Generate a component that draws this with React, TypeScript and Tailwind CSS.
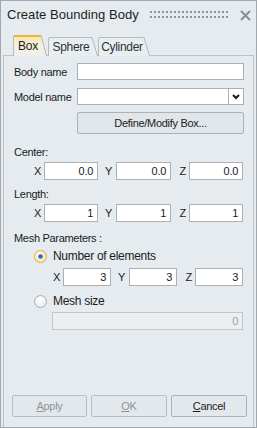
import React from 'react';

const font = { fontFamily: '"Liberation Sans", Arial, sans-serif' };

function Tab({ label, width, active }: { label: string; width: number; active?: boolean }) {
  const h = active ? 21 : 19;
  return (
    <div className="relative flex items-center justify-center" style={{ width, height: h }}>
      <svg className="absolute inset-0" width={width} height={h} viewBox={`0 0 ${width} ${h}`}>
        <defs>
          <linearGradient id="tabact" x1="0" y1="0" x2="0" y2="1">
            <stop offset="0" stopColor="#fbe6a6" />
            <stop offset="0.45" stopColor="#f6efd8" />
            <stop offset="1" stopColor="#eef0ed" />
          </linearGradient>
        </defs>
        <path
          d={`M0.5 ${h} V2 Q0.5 0.5 2 0.5 H${width - 6} L${width - 0.5} ${h}`}
          fill={active ? 'url(#tabact)' : '#e9eef1'}
          stroke="#b4babf"
        />
        {active && <path d={`M1 1 H${width - 6}`} stroke="#e8b53a" strokeWidth="2" />}
      </svg>
      <span className={`relative pr-[4px] text-[12px] ${active ? 'text-[#1b1b1b]' : 'text-[#2f3235]'}`}>{label}</span>
    </div>
  );
}

function Field({ value, w, disabled }: { value: string; w: number; disabled?: boolean }) {
  return (
    <div
      className={`h-[18px] border flex items-center justify-end pr-[4px] ${
        disabled ? 'bg-[#eceff1] border-[#c2c6ca] text-[#9aa0a5]' : 'bg-white border-[#abb0b5] text-[#1b1b1b]'
      }`}
      style={{ width: w }}
    >
      {value}
    </div>
  );
}

function Radio({ checked }: { checked?: boolean }) {
  return (
    <svg width="13" height="13" viewBox="0 0 13 13">
      <defs>
        <radialGradient id={checked ? 'rg1' : 'rg2'} cx="0.4" cy="0.35" r="0.7">
          <stop offset="0" stopColor={checked ? '#fff9e6' : '#ffffff'} />
          <stop offset="1" stopColor={checked ? '#f7e2a8' : '#e6eaed'} />
        </radialGradient>
      </defs>
      <circle cx="6.5" cy="6.5" r="6" fill={`url(#${checked ? 'rg1' : 'rg2'})`} stroke={checked ? '#e2a93c' : '#a9afb4'} />
      {checked && <circle cx="6.5" cy="6.5" r="2.3" fill="#2869d6" />}
    </svg>
  );
}

export default function App() {
  return (
    <div
      className="w-[257px] h-[428px] bg-[#e5ebef] border border-[#a2a8ad] flex flex-col text-[11px] leading-[14px] tracking-[-0.3px] text-[#1b1b1b] overflow-hidden"
      style={font}
    >
      {/* title */}
      <div className="h-[28px] flex items-center pl-[6px] pr-[5px] shrink-0">
        <span className="text-[13px] tracking-[0.05px] text-[#1e1e1e]">Create Bounding Body</span>
        <svg className="ml-[11px]" width="80" height="8" viewBox="0 0 80 8">
          {Array.from({ length: 20 }).map((_, i) => (
            <g key={i} fill="#8d949a">
              <rect x={i * 4} y="0" width="2" height="2" />
              <rect x={i * 4} y="5" width="2" height="2" />
            </g>
          ))}
        </svg>
        <svg className="ml-auto" width="11" height="11" viewBox="0 0 11 11">
          <path d="M1 1 L10 10 M10 1 L1 10" stroke="#8a9196" strokeWidth="2" />
        </svg>
      </div>

      {/* tabs */}
      <div className="mt-[6px] flex items-end pl-[12px] shrink-0 relative z-10">
        <Tab label="Box" width={34} active />
        <div className="ml-[1px]" />
        <Tab label="Sphere" width={50} />
        <Tab label="Cylinder" width={52} />
      </div>

      {/* panel */}
      <div className="flex-1 mx-[2px] -mt-px border border-b-0 border-[#bcc2c6] flex flex-col pb-[10px]">
        <div className="flex items-center mt-[7px] pl-[10px]">
          <span className="w-[63px]">Body name</span>
          <div className="w-[167px] h-[17px] bg-white border border-[#abb0b5]" />
        </div>
        <div className="flex items-center mt-[8px] pl-[10px]">
          <span className="w-[63px]">Model name</span>
          <div className="w-[167px] h-[17px] bg-white border border-[#abb0b5] flex justify-end">
            <div className="w-[15px] h-full border-l border-[#abb0b5] flex items-center justify-center">
              <svg width="8" height="6" viewBox="0 0 8 6">
                <path d="M1 1 L4 4 L7 1" stroke="#1b1b1b" strokeWidth="2" fill="none" />
              </svg>
            </div>
          </div>
        </div>
        <div className="flex mt-[7px] pl-[73px]">
          <button className="w-[167px] h-[22px] bg-[#e1e6ea] border border-[#adb2b6] rounded-[2px] text-[#1b1b1b]">
            Define/Modify Box...
          </button>
        </div>

        <div className="mt-[11px] pl-[10px]">Center:</div>
        <div className="flex items-center mt-[3px] pl-[26px]">
          <span className="w-[14px] text-right pr-[3px]">X</span>
          <Field value="0.0" w={54} />
          <span className="w-[18px] text-right pr-[4px]">Y</span>
          <Field value="0.0" w={55} />
          <span className="w-[18px] text-right pr-[3px]">Z</span>
          <Field value="0.0" w={54} />
        </div>

        <div className="mt-[7px] pl-[10px]">Length:</div>
        <div className="flex items-center mt-[3px] pl-[26px]">
          <span className="w-[14px] text-right pr-[3px]">X</span>
          <Field value="1" w={54} />
          <span className="w-[18px] text-right pr-[4px]">Y</span>
          <Field value="1" w={55} />
          <span className="w-[18px] text-right pr-[3px]">Z</span>
          <Field value="1" w={54} />
        </div>

        <div className="mt-[9px] pl-[10px]">Mesh Parameters :</div>
        <div className="flex items-center mt-[4px] pl-[30px] gap-[6px]">
          <Radio checked />
          <span className="text-[12px] tracking-[-0.3px]">Number of elements</span>
        </div>
        <div className="flex items-center mt-[5px] pl-[45px]">
          <span className="w-[14px] text-right pr-[3px]">X</span>
          <Field value="3" w={48} />
          <span className="w-[18px] text-right pr-[4px]">Y</span>
          <Field value="3" w={48} />
          <span className="w-[18px] text-right pr-[3px]">Z</span>
          <Field value="3" w={48} />
        </div>
        <div className="flex items-center mt-[8px] pl-[30px] gap-[6px]">
          <Radio />
          <span className="text-[12px] tracking-[-0.3px]">Mesh size</span>
        </div>
        <div className="flex mt-[4px] pl-[48px]">
          <Field value="0" w={191} disabled />
        </div>

        <div className="mt-auto flex pl-[8px] gap-[4px]">
          <button className="w-[75px] h-[22px] bg-[#e3e8ec] border border-[#b9bec2] rounded-[2px] text-[#8f9499]">
            <span className="underline underline-offset-1">A</span>pply
          </button>
          <button className="w-[76px] h-[22px] bg-[#e3e8ec] border border-[#b9bec2] rounded-[2px] text-[#8f9499]">
            <span className="underline underline-offset-1">O</span>K
          </button>
          <button className="w-[76px] h-[22px] bg-[#e3e8ec] border border-[#adb2b6] rounded-[2px] text-[#1b1b1b]">
            <span className="underline underline-offset-1">C</span>ancel
          </button>
        </div>
      </div>
    </div>
  );
}
